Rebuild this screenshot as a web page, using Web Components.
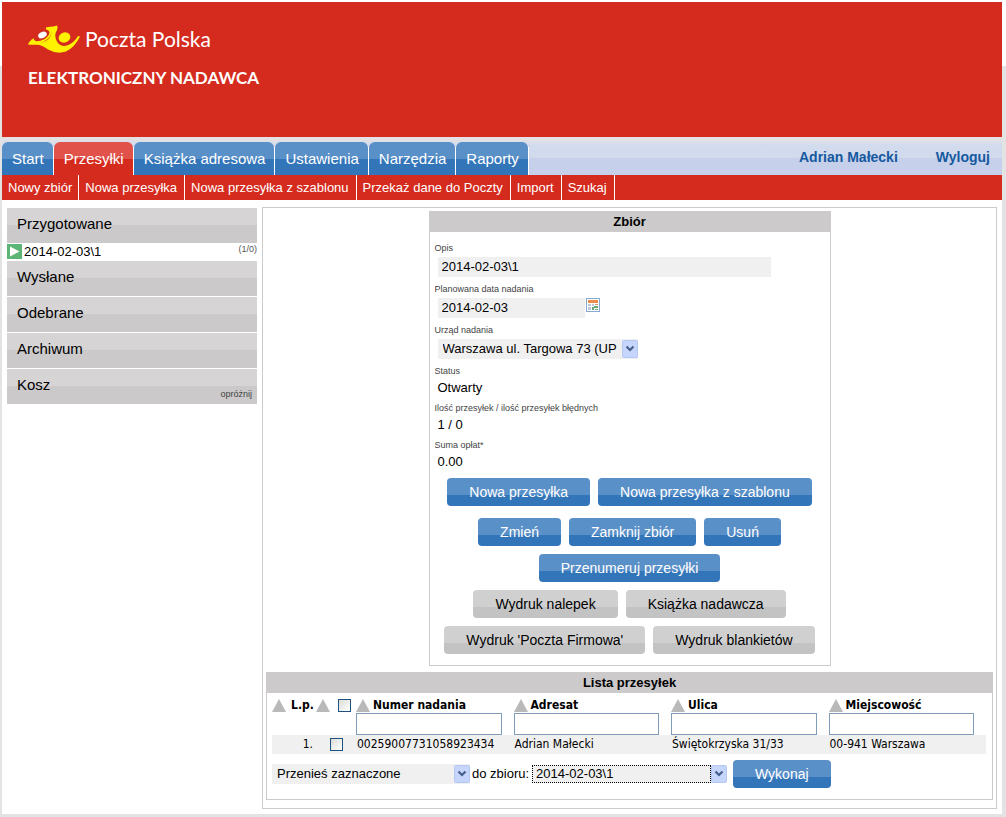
<!DOCTYPE html>
<html lang="pl">
<head>
<meta charset="utf-8">
<title>Elektroniczny Nadawca</title>
<style>
  html { background: #e4e3e4; }
  body {
    margin: 0;
    background: linear-gradient(#fff 66px, #e4e3e4 66px);
    font: 13px/16px "Liberation Sans", Arial, sans-serif;
    color: #000;
    --red: #d52b1e;
    --line: #cccacb;
    --head: #cccacb;
    --field: #f0f0f0;
    --blue: linear-gradient(#5a90c8 60%, #3375b9 60%);
  }
</style>
</head>
<body>
<en-app></en-app>

<script>
const define = (name, html, setup) => {
  const template = document.createElement('template');
  template.innerHTML = html;
  customElements.define(name, class extends HTMLElement {
    constructor() {
      super();
      this.attachShadow({ mode: 'open' }).append(template.content.cloneNode(true));
    }
    connectedCallback() { if (setup) setup(this, this.shadowRoot); }
  });
};

/* Brand banner */
define('en-banner', `
<style>
  :host { display: block; box-sizing: border-box; min-height: 135px; padding: 22px 26px; background: var(--red); color: #fff; }
  .brand { display: flex; align-items: center; gap: 5px; font: 21px/30px Lato, sans-serif; }
  svg { display: block; }
  h1 { margin: 12px 0 0; font: bold 17px/24px Lato, sans-serif; }
</style>
<div class="brand">
  <svg width="52" height="30" viewBox="0 0 52 30" aria-hidden="true">
    <path fill="#fff200" d="M0 20.500Q1 17 6 14Q12 5 20 3Q26 2.500 29 1.500Q30.500 4 28 8Q26 13 29.500 18.500Q33 23 39 21.500Q46 19 50 12L52 12.500Q47 23 38 27.500Q29 30.500 20 25.500Q14 21 9 20.800Q3 21 0 20.500Z"/>
    <ellipse cx="14.500" cy="11.300" rx="9.500" ry="6.500" transform="rotate(-30 14.500 11.300)" fill="#d52b1e"/>
    <path fill="none" stroke="#fff200" stroke-width="2" d="M4 16.500Q9 20 16 16.500Q22 13 22.500 8.500Q22 5 18 4.500"/>
    <ellipse cx="14.500" cy="11" rx="4.500" ry="3" transform="rotate(-25 14.500 11)" fill="#fff"/>
    <ellipse cx="36.500" cy="13.500" rx="6" ry="5" transform="rotate(-20 36.500 13.500)" fill="#fff200"/>
  </svg>
  <span>Poczta Polska</span>
</div>
<h1>ELEKTRONICZNY NADAWCA</h1>`);

/* Main tabs */
define('en-tab', `
<style>
  :host { display: block; }
  a { display: block; padding: 0 9px 0 10px; font-size: 15px; line-height: 33px; color: #fff; text-decoration: none;
      border-radius: 6px 6px 0 0; background: linear-gradient(#5a90c8 50%, #3375b9 50%); }
  :host([active]) a { background: linear-gradient(#e0524a 50%, var(--red) 50%); }
</style>
<a href="#"><slot></slot></a>`);

define('en-tabbar', `
<style>
  :host { display: flex; align-items: flex-end; justify-content: space-between; min-height: 38px;
          background: linear-gradient(#e4e1e2 2px, #d2dcef 8px, #d2daec 21px, #c6d0ea 21px); }
  nav { display: flex; gap: 1px; padding-right: 1px; background: linear-gradient(transparent 5px, #fff 5px); }
  .user { display: flex; gap: 38px; padding: 0 12px; font-size: 14px; line-height: 35px; font-weight: bold; }
  .user a { color: #15599f; text-decoration: none; }
</style>
<nav>
  <en-tab>Start</en-tab><en-tab active>Przesyłki</en-tab><en-tab>Książka adresowa</en-tab>
  <en-tab>Ustawienia</en-tab><en-tab>Narzędzia</en-tab><en-tab>Raporty</en-tab>
</nav>
<div class="user"><a href="#">Adrian Małecki</a><a href="#">Wyloguj</a></div>`);

define('en-submenu', `
<style>
  :host { display: flex; background: var(--red); }
  a { padding: 0 6px; border-right: 1px solid #fff; color: #fff; line-height: 25px; text-decoration: none; }
  a:nth-child(n+3) { padding-right: 7px; }
</style>
<a href="#">Nowy zbiór</a><a href="#">Nowa przesyłka</a><a href="#">Nowa przesyłka z szablonu</a><a href="#">Przekaż dane do Poczty</a><a href="#">Import</a><a href="#">Szukaj</a>`);

/* Folder list */
define('en-folder', `
<style>
  :host { display: block; }
  .bar { display: flex; justify-content: space-between; align-items: flex-end; height: 35px;
         background: linear-gradient(#d6d4d5 48%, #cbc9ca 48%); }
  a { flex: 1; align-self: stretch; padding-left: 10px; font-size: 15px; line-height: 32px; color: #000; text-decoration: none; }
</style>
<div class="bar"><a href="#"><slot></slot></a><slot name="action"></slot></div>`);

define('en-folders', `
<style>
  :host { display: flex; flex-direction: column; gap: 1px; }
  .group { display: block; }
  .set { display: flex; align-items: center; gap: 2px; height: 17px; }
  .set svg { display: block; }
  .set a { flex: 1; color: #000; text-decoration: none; }
  small { font-size: 9px; line-height: 12px; color: #555; align-self: flex-start; }
  .empty { font-size: 9px; line-height: 12px; padding: 0 5px 4px 0; color: #444; text-decoration: none; }
</style>
<div class="group">
  <en-folder>Przygotowane</en-folder>
  <div class="set">
    <svg width="15" height="15" viewBox="0 0 15 15" aria-hidden="true"><rect width="15" height="15" fill="#5cb574"/><path d="M3 2.500L12.500 7.500L3 12.500Z" fill="#fff"/></svg>
    <a href="#">2014-02-03\\1</a><small>(1/0)</small>
  </div>
</div>
<en-folder>Wysłane</en-folder>
<en-folder>Odebrane</en-folder>
<en-folder>Archiwum</en-folder>
<en-folder>Kosz<a slot="action" class="empty" href="#">opróżnij</a></en-folder>`);

/* Titled box */
define('en-panel', `
<style>
  :host { display: block; box-sizing: border-box; border: 1px solid var(--line); border-top: 0; background: #fff; }
  h2 { margin: 0; font-size: 13px; line-height: 21px; text-align: center; background: var(--head); }
</style>
<h2></h2><slot></slot>`, (el, root) => { root.querySelector('h2').textContent = el.getAttribute('heading'); });

define('en-button', `
<style>
  :host { display: block; }
  button { display: block; height: 28px; padding: 0 22px; border: 0; border-radius: 4px; font: 14px/28px "Liberation Sans", Arial, sans-serif;
           color: #fff; background: var(--blue); white-space: nowrap; }
  :host([plain]) button { color: #000; background: linear-gradient(#d0d0d0 60%, #c3c3c3 60%); }
</style>
<button type="button"><slot></slot></button>`);

const arrow = `
  <svg class="arrow" width="16" height="18" viewBox="0 0 16 18" aria-hidden="true">
    <rect x="0.500" y="0.500" width="15" height="17" rx="1" fill="#c6d5fb" stroke="#b5c7f3"/>
    <path d="M4.500 6.500L8 10L11.500 6.500" fill="none" stroke="#46608c" stroke-width="2.200"/>
  </svg>`;

define('en-select', `
<style>
  :host { display: flex; align-items: center; gap: 3px; }
  .box { flex: 1; display: grid; grid-template-columns: 1fr 16px; align-items: center; background: var(--field); }
  :host([focused]) .box { background: linear-gradient(90deg, var(--field) calc(100% - 16px), #fff 0); }
  select { appearance: none; grid-area: 1 / 1; min-width: 0; height: 20px; margin: 0; padding: 0 0 0 5px; border: 0; border-radius: 0;
           background: none; color: #000; font: 13px/20px "Liberation Sans", Arial, sans-serif; text-overflow: clip; }
  :host([focused]) select { height: 18px; line-height: 16px; padding-left: 3px; border: 1px dotted #000; }
  .arrow { grid-area: 1 / 2; display: block; pointer-events: none; }
  label:empty { display: none; }
</style>
<label for="s"></label>
<div class="box"><select id="s"><option></option></select>${arrow}</div>`, (el, root) => {
  root.querySelector('option').textContent = el.getAttribute('value');
  const label = el.getAttribute('label');
  if (label) root.querySelector('label').textContent = label;
  else root.querySelector('select').setAttribute('aria-label', el.getAttribute('name'));
});

/* Labelled form values */
define('en-field', `
<style>
  :host { display: block; margin-bottom: 6px; }
  label, .label { display: block; margin-bottom: 3px; font-size: 9px; line-height: 12px; color: #444; }
  .row { display: flex; align-items: flex-start; gap: 1px; padding-left: 3px; }
  input { box-sizing: border-box; height: 20px; margin: 0; padding: 0 4px; border: 0; background: var(--field); color: #000;
          font: 13px/20px "Liberation Sans", Arial, sans-serif; }
  .text { width: 333px; } .date { width: 147px; } en-select { width: 200px; }
  output { line-height: 16px; }
  button { padding: 0; border: 0; background: none; }
  svg { display: block; }
</style>`, (el, root) => {
  if (root.querySelector('.row')) return;
  const { kind, label, value } = Object.fromEntries([...el.attributes].map(a => [a.name, a.value]));
  const calendar = `<button type="button" aria-label="Kalendarz"><svg width="14" height="14" viewBox="0 0 14 14">
    <rect x="0.500" y="0.500" width="13" height="13" fill="#fff" stroke="#86a9cf"/>
    <rect x="2" y="2" width="10" height="3" fill="#ee8b4b"/>
    <path fill="#b8c8d8" d="M2 6h3v2H2zM6 6h2v2H6zM2 9h3v3H2z"/><path fill="#e0936c" d="M9 6h3v1H9z"/>
    <path fill="#65a978" d="M6 9h2v3H6zM8 8h4v2H8zM9 11h3v1H9z"/></svg></button>`;
  const controls = {
    text: `<input id="c" class="text" value="${value}">`,
    date: `<input id="c" class="date" value="${value}">${calendar}`,
    select: `<en-select name="${label}" value="${value}"></en-select>`,
    output: `<output id="c">${value}</output>`
  };
  const caption = kind === 'select' ? `<div class="label">${label}</div>` : `<label for="c">${label}</label>`;
  const holder = document.createElement('template');
  holder.innerHTML = `${caption}<div class="row">${controls[kind]}</div>`;
  root.append(holder.content);
});

define('en-batch', `
<style>
  :host { display: block; padding: 10px 5px 11px; }
  .actions { display: flex; flex-direction: column; gap: 8px; margin-top: 8px; }
  .actions div { display: flex; flex-wrap: wrap; justify-content: center; gap: 8px; }
  .actions .first { margin-bottom: 4px; }
</style>
<en-field kind="text" label="Opis" value="2014-02-03\\1"></en-field>
<en-field kind="date" label="Planowana data nadania" value="2014-02-03"></en-field>
<en-field kind="select" label="Urząd nadania" value="Warszawa ul. Targowa 73 (UP"></en-field>
<en-field kind="output" label="Status" value="Otwarty"></en-field>
<en-field kind="output" label="Ilość przesyłek / ilość przesyłek błędnych" value="1 / 0"></en-field>
<en-field kind="output" label="Suma opłat*" value="0.00"></en-field>
<div class="actions">
  <div class="first"><en-button>Nowa przesyłka</en-button><en-button>Nowa przesyłka z szablonu</en-button></div>
  <div><en-button>Zmień</en-button><en-button>Zamknij zbiór</en-button><en-button>Usuń</en-button></div>
  <div><en-button>Przenumeruj przesyłki</en-button></div>
  <div><en-button plain>Wydruk nalepek</en-button><en-button plain>Książka nadawcza</en-button></div>
  <div><en-button plain>Wydruk 'Poczta Firmowa'</en-button><en-button plain>Wydruk blankietów</en-button></div>
</div>`);

/* Shipments */
const sort = '<svg width="14" height="13" viewBox="0 0 14 13" aria-hidden="true"><path d="M7 0L14 13H0Z" fill="#b9b9b9"/></svg>';
const column = (id, name) => `<th scope="col"><label class="head" for="${id}">${sort}${name}</label><input id="${id}" type="text"></th>`;

define('en-shipments', `
<style>
  :host { display: block; padding: 4px 6px 0 5px; font-family: "DejaVu Sans Condensed", Tahoma, sans-serif; }
  table { width: 100%; table-layout: fixed; border-collapse: collapse; }
  col.lp { width: 44px; } col.pick { width: 40px; }
  th, td { padding: 0; text-align: left; vertical-align: top; font-size: 12px; line-height: 16px; }
  .head { display: flex; align-items: center; gap: 3px; height: 16px; white-space: nowrap; }
  .head svg { flex: none; }
  .lphead { gap: 5px; }
  .pickhead { gap: 8px; }
  th input[type=text] { display: block; box-sizing: border-box; width: calc(100% - 12px); height: 22px; margin: 0; border: 1px solid #7f9db9; background: #fff; }
  input[type=checkbox] { appearance: none; box-sizing: border-box; flex: none; display: block; width: 13px; height: 13px; margin: 0;
    border: 1px solid #1c5180; background: linear-gradient(135deg, #dcdcd7, #fff); }
  tbody tr { background: var(--field); }
  td { height: 19px; line-height: 19px; padding-left: 1px; vertical-align: middle; }
  td.n { text-align: right; padding-right: 3px; }
  td.pick { padding-left: 14px; }
</style>
<table>
  <colgroup><col class="lp"><col class="pick"><col><col><col><col></colgroup>
  <thead><tr>
    <th scope="col"><span class="head lphead">${sort}L.p.</span></th>
    <th scope="col"><span class="head pickhead">${sort}<input type="checkbox" aria-label="Zaznacz wszystkie"></span></th>
    ${column('number', 'Numer nadania')}${column('name', 'Adresat')}${column('street', 'Ulica')}${column('city', 'Miejscowość')}
  </tr></thead>
  <tbody><tr>
    <td class="n">1.</td><td class="pick"><input type="checkbox" aria-label="Zaznacz 1"></td>
    <td>00259007731058923434</td><td>Adrian Małecki</td><td>Świętokrzyska 31/33</td><td>00-941 Warszawa</td>
  </tr></tbody>
</table>`);

define('en-move', `
<style>
  :host { display: flex; flex-wrap: wrap; align-items: center; padding: 6px 5px 11px; }
  .what { width: 198px; }
  .where { width: 255px; margin: 0 6px 0 2px; }
</style>
<en-select class="what" name="Operacja" value="Przenieś zaznaczone"></en-select>
<en-select class="where" focused label="do zbioru:" value="2014-02-03\\1"></en-select>
<en-button>Wykonaj</en-button>`);

/* Page */
define('en-app', `
<style>
  :host { display: block; margin: 0 4px 3px 2px; padding-top: 2px; background: #fff; }
  .content { display: flex; align-items: flex-start; gap: 5px; padding: 7px 5px 5px; }
  en-folders { flex: none; width: 250px; margin-top: 1px; }
  main { flex: 1; min-width: 0; box-sizing: border-box; padding: 3px 3px 8px; border: 1px solid var(--line); }
  .batch { max-width: 402px; margin: 0 auto 6px; }
</style>
<en-banner></en-banner>
<en-tabbar></en-tabbar>
<en-submenu></en-submenu>
<div class="content">
  <en-folders></en-folders>
  <main>
    <en-panel class="batch" heading="Zbiór"><en-batch></en-batch></en-panel>
    <en-panel heading="Lista przesyłek"><en-shipments></en-shipments><en-move></en-move></en-panel>
  </main>
</div>`);
</script>
</body>
</html>
